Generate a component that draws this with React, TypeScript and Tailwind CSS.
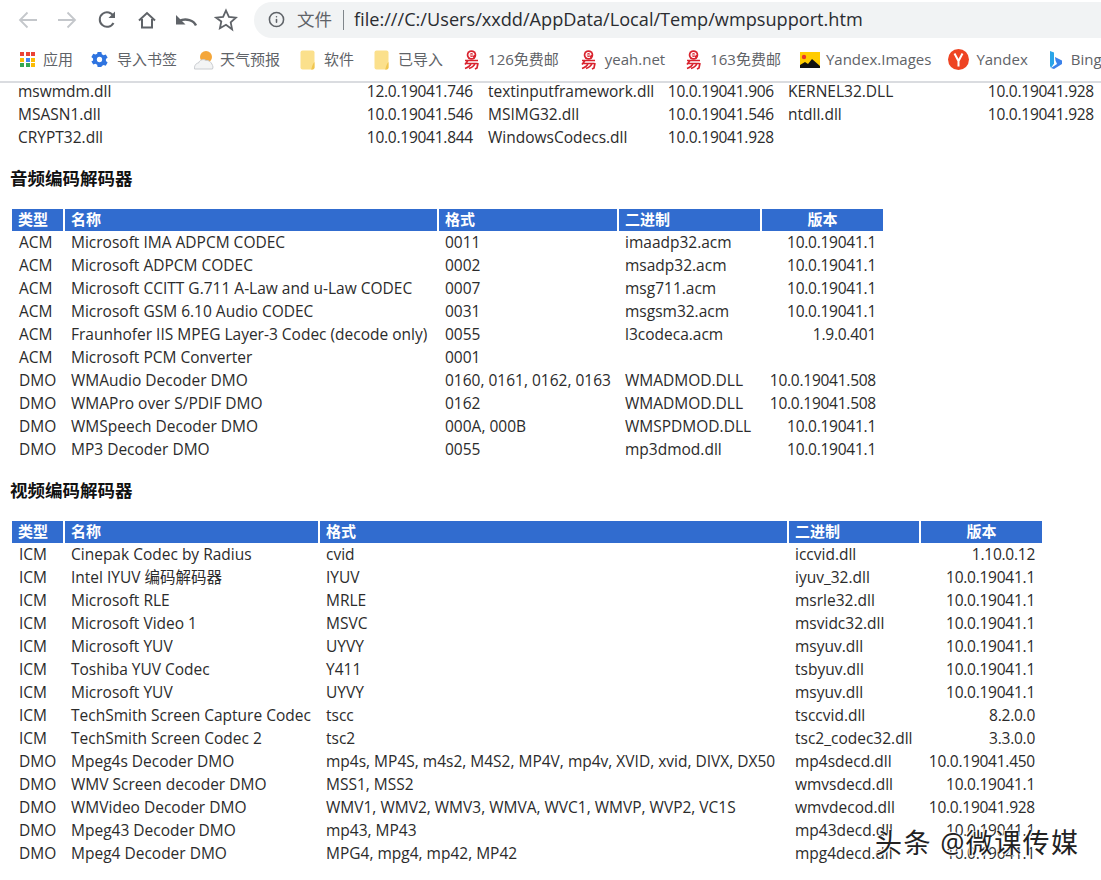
import { Info } from "lucide-react";

const font = "font-['Open_Sans','Noto_Sans_CJK_SC',sans-serif]";

const sysRows = [
  ["mswmdm.dll", "12.0.19041.746", "textinputframework.dll", "10.0.19041.906", "KERNEL32.DLL", "10.0.19041.928"],
  ["MSASN1.dll", "10.0.19041.546", "MSIMG32.dll", "10.0.19041.546", "ntdll.dll", "10.0.19041.928"],
  ["CRYPT32.dll", "10.0.19041.844", "WindowsCodecs.dll", "10.0.19041.928", "", ""],
];

const audioRows = [
  ["ACM", "Microsoft IMA ADPCM CODEC", "0011", "imaadp32.acm", "10.0.19041.1"],
  ["ACM", "Microsoft ADPCM CODEC", "0002", "msadp32.acm", "10.0.19041.1"],
  ["ACM", "Microsoft CCITT G.711 A-Law and u-Law CODEC", "0007", "msg711.acm", "10.0.19041.1"],
  ["ACM", "Microsoft GSM 6.10 Audio CODEC", "0031", "msgsm32.acm", "10.0.19041.1"],
  ["ACM", "Fraunhofer IIS MPEG Layer-3 Codec (decode only)", "0055", "l3codeca.acm", "1.9.0.401"],
  ["ACM", "Microsoft PCM Converter", "0001", "", ""],
  ["DMO", "WMAudio Decoder DMO", "0160, 0161, 0162, 0163", "WMADMOD.DLL", "10.0.19041.508"],
  ["DMO", "WMAPro over S/PDIF DMO", "0162", "WMADMOD.DLL", "10.0.19041.508"],
  ["DMO", "WMSpeech Decoder DMO", "000A, 000B", "WMSPDMOD.DLL", "10.0.19041.1"],
  ["DMO", "MP3 Decoder DMO", "0055", "mp3dmod.dll", "10.0.19041.1"],
];

const videoRows = [
  ["ICM", "Cinepak Codec by Radius", "cvid", "iccvid.dll", "1.10.0.12"],
  ["ICM", "Intel IYUV 编码解码器", "IYUV", "iyuv_32.dll", "10.0.19041.1"],
  ["ICM", "Microsoft RLE", "MRLE", "msrle32.dll", "10.0.19041.1"],
  ["ICM", "Microsoft Video 1", "MSVC", "msvidc32.dll", "10.0.19041.1"],
  ["ICM", "Microsoft YUV", "UYVY", "msyuv.dll", "10.0.19041.1"],
  ["ICM", "Toshiba YUV Codec", "Y411", "tsbyuv.dll", "10.0.19041.1"],
  ["ICM", "Microsoft YUV", "UYVY", "msyuv.dll", "10.0.19041.1"],
  ["ICM", "TechSmith Screen Capture Codec", "tscc", "tsccvid.dll", "8.2.0.0"],
  ["ICM", "TechSmith Screen Codec 2", "tsc2", "tsc2_codec32.dll", "3.3.0.0"],
  ["DMO", "Mpeg4s Decoder DMO", "mp4s, MP4S, m4s2, M4S2, MP4V, mp4v, XVID, xvid, DIVX, DX50", "mp4sdecd.dll", "10.0.19041.450"],
  ["DMO", "WMV Screen decoder DMO", "MSS1, MSS2", "wmvsdecd.dll", "10.0.19041.1"],
  ["DMO", "WMVideo Decoder DMO", "WMV1, WMV2, WMV3, WMVA, WVC1, WMVP, WVP2, VC1S", "wmvdecod.dll", "10.0.19041.928"],
  ["DMO", "Mpeg43 Decoder DMO", "mp43, MP43", "mp43decd.dll", "10.0.19041.1"],
  ["DMO", "Mpeg4 Decoder DMO", "MPG4, mpg4, mp42, MP42", "mpg4decd.dll", "10.0.19041.1"],
];

function NetEase() {
  return (
    <svg viewBox="0 0 17 20" className="h-5 w-[17px] shrink-0" fill="none" stroke="#d9232e">
      <circle cx="8.500" cy="5" r="4.800" fill="#d9232e" stroke="none" />
      <path d="M6 5h5M11 5a2.500 2.500 0 1 0-1 2" stroke="#fff" strokeWidth="1.200" />
      <path d="M2 10.500h13M2.500 13.500h12M5 10.500l-3 4M15 13l-1 5-2 1M8 13.500c-1 3-3 4-6 5M12 13.500c-1 2.500-3 4-6 5" strokeWidth="1.700" />
    </svg>
  );
}

function Folder() {
  return (
    <svg viewBox="0 0 15 20" className="h-5 w-[15px] shrink-0">
      <rect x="0.500" y="0.500" width="14" height="19" rx="2" fill="#fbe08c" />
      <path d="M14.500 12v5.500a2 2 0 0 1-2 2H11c1-1 1-5 3.500-7.500z" fill="#f0c650" />
    </svg>
  );
}

function Bookmark({ icon, label, className }: { icon: React.ReactNode; label: string; className: string }) {
  return (
    <div className={`flex shrink-0 items-center ${className}`}>
      {icon}
      <span className="whitespace-nowrap text-[15px] text-[#5f6368]">{label}</span>
    </div>
  );
}

function Toolbar() {
  return (
    <div className="flex h-[38px] items-center pl-[18px] pt-[1px]">
      <svg viewBox="0 0 20 20" className="h-5 w-5" fill="none" stroke="#c4c7cb" strokeWidth="1.800">
        <path d="M19 10H2M9.500 2.500L2 10l7.500 7.500" />
      </svg>
      <svg viewBox="0 0 20 20" className="ml-[19px] h-5 w-5" fill="none" stroke="#c4c7cb" strokeWidth="1.800">
        <path d="M1 10h17M10.500 2.500L18 10l-7.500 7.500" />
      </svg>
      <svg viewBox="0 0 20 20" className="ml-[20px] h-5 w-5" fill="none" stroke="#5f6368" strokeWidth="2">
        <path d="M16.500 13a7.300 7.300 0 1 1 .2-6.500" />
        <path d="M18 1.500V8h-6.500z" fill="#5f6368" stroke="none" />
      </svg>
      <svg viewBox="0 0 20 20" className="ml-[20px] h-5 w-5" fill="none" stroke="#5f6368" strokeWidth="2">
        <path d="M2 10.500L10 3l8 7.500M5 9v8.500h10V9" />
      </svg>
      <svg viewBox="0 0 22 20" className="ml-[18px] h-5 w-[22px]" fill="none" stroke="#5f6368" strokeWidth="2.400">
        <path d="M21 15.500C19 10.500 11 7.500 4 11" />
        <path d="M1 5v9.500h9.500z" fill="#5f6368" stroke="none" />
      </svg>
      <svg viewBox="0 0 24 24" className="ml-[17px] h-[24px] w-[24px]" fill="none" stroke="#5f6368" strokeWidth="1.800">
        <path d="M12 2.500l2.900 6.400 7 .8-5.200 4.700 1.400 6.900L12 16.800 5.900 20.300l1.400-6.900L2.100 9.700l7-.8z" />
      </svg>
      <div className="ml-[16px] flex h-[36px] min-w-0 flex-1 items-center rounded-l-full bg-[#f1f3f4] pl-[14px]">
        <Info className="h-[17px] w-[17px] text-[#5f6368]" strokeWidth={2.200} />
        <span className="ml-[12px] text-[17.500px] text-[#5f6368]">文件</span>
        <span className="ml-[11px] h-[20px] w-px bg-[#80868b]" />
        <span className="ml-[10px] whitespace-nowrap text-[18.150px] text-[#2a2c30]">file:///C:/Users/xxdd/AppData/Local/Temp/wmpsupport.htm</span>
      </div>
    </div>
  );
}

function Bookmarks() {
  return (
    <div className="flex h-[43px] items-center overflow-hidden">
      <Bookmark
        className="ml-[20px] gap-[8px]"
        label="应用"
        icon={
          <div className="grid h-[15px] w-[15px] shrink-0 grid-cols-3 gap-[1.500px]">
            {["#ea4335", "#ea4335", "#ea4335", "#fbbc05", "#4285f4", "#fbbc05", "#34a853", "#34a853", "#fbbc05"].map((c, i) => (
              <span key={i} className="bg-current" style={{ color: c }} />
            ))}
          </div>
        }
      />
      <Bookmark
        className="ml-[18px] gap-[9px]"
        label="导入书签"
        icon={
          <svg viewBox="0 0 18 18" className="h-[17px] w-[17px] shrink-0">
            <path d="M7 1h4l.5 2.400 1.800 1 2.300-.8 2 3.400-1.800 1.600v2l1.800 1.600-2 3.400-2.300-.8-1.800 1L11 17H7l-.5-2.400-1.800-1-2.300.8-2-3.400L2.200 10V8L.4 6.400l2-3.400 2.300.8 1.800-1z" fill="#2f74e0" />
            <circle cx="9" cy="9" r="2.800" fill="#fff" />
          </svg>
        }
      />
      <Bookmark
        className="ml-[17px] gap-[6px]"
        label="天气预报"
        icon={
          <svg viewBox="0 0 20 20" className="h-5 w-5 shrink-0">
            <circle cx="12" cy="7" r="6" fill="#f4a63a" />
            <path d="M.5 19c-.5-3 1.500-6 4-6 1-3 5-4.500 7.500-2.500 3-.5 6 2 7 6.500l-.5 2z" fill="#f3f4f5" stroke="#c9ccd0" />
          </svg>
        }
      />
      <Bookmark className="ml-[20px] gap-[9px]" label="软件" icon={<Folder />} />
      <Bookmark className="ml-[20px] gap-[9px]" label="已导入" icon={<Folder />} />
      <Bookmark className="ml-[20px] gap-[8px]" label="126免费邮" icon={<NetEase />} />
      <Bookmark className="ml-[21px] gap-[8px]" label="yeah.net" icon={<NetEase />} />
      <Bookmark className="ml-[20px] gap-[8px]" label="163免费邮" icon={<NetEase />} />
      <Bookmark
        className="ml-[19px] gap-[6px]"
        label="Yandex.Images"
        icon={
          <svg viewBox="0 0 20 16" className="h-4 w-5 shrink-0">
            <rect width="20" height="16" fill="#fc0" />
            <circle cx="4" cy="5" r="2.200" fill="#e8362c" />
            <path d="M0 16v-3l5-3 3 2 4-5 8 7v2z" fill="#111" />
          </svg>
        }
      />
      <Bookmark
        className="ml-[17px] gap-[7px]"
        label="Yandex"
        icon={
          <svg viewBox="0 0 21 21" className="h-[21px] w-[21px] shrink-0">
            <circle cx="10.500" cy="10.500" r="10.500" fill="#ee4423" />
            <path d="M6.500 4.500l4 7.500 4-7.500M10.500 11.500v6" fill="none" stroke="#fff" strokeWidth="2" />
          </svg>
        }
      />
      <Bookmark
        className="ml-[21px] gap-[8px]"
        label="Bing"
        icon={
          <svg viewBox="0 0 14 20" className="h-5 w-[14px] shrink-0">
            <path d="M1 1l4 1.500v11L2 18l-1-2z" fill="#2aa5e8" />
            <path d="M6 7l7 3.500v3.500L5 19l-3-1 6-4-1.500-3.500z" fill="#3b82ea" />
          </svg>
        }
      />
    </div>
  );
}

function DataTable({ widths, heads, rows }: { widths: number[]; heads: string[]; rows: string[][] }) {
  return (
    <table className="ml-3 table-fixed border-collapse text-[15.500px] leading-[23px] text-[#2b2b2b]">
      <colgroup>
        {widths.map((w, i) => (
          <col key={i} style={{ width: w }} />
        ))}
      </colgroup>
      <thead>
        <tr>
          {heads.map((h, i) => (
            <th
              key={i}
              className={`h-[22px] border-r-2 border-white bg-[#316ccf] px-[6px] pb-[2px] text-[15px] font-bold leading-[20px] text-white last:border-r-0 ${i === 4 ? "text-center" : "text-left"}`}
            >
              {h}
            </th>
          ))}
        </tr>
      </thead>
      <tbody>
        {rows.map((r, i) => (
          <tr key={i} className="h-[23px]">
            {r.map((c, j) => (
              <td key={j} className={`overflow-visible whitespace-nowrap pl-[7px] pr-[7px] ${j === 4 ? "text-right tracking-[-0.25px]" : ""}`}>
                {c}
              </td>
            ))}
          </tr>
        ))}
      </tbody>
    </table>
  );
}

export default function App() {
  return (
    <div className={`relative h-[880px] w-[1101px] overflow-hidden bg-white ${font}`}>
      <div className="border-b-2 border-[#dadce0]">
        <Toolbar />
        <Bookmarks />
      </div>
      <table className="ml-[11px] mt-[-3px] table-fixed border-collapse text-[15.500px] leading-[23px] text-[#2b2b2b]">
        <colgroup>
          <col className="w-[469px]" />
          <col className="w-[301px]" />
          <col className="w-[320px]" />
        </colgroup>
        <tbody>
          {sysRows.map((r) => (
            <tr key={r[0]} className="h-[23px]">
              <td className="px-[7px]">
                <div className="flex items-baseline justify-between">
                  <span>{r[0]}</span>
                  <span className="tracking-[-0.25px]">{r[1]}</span>
                </div>
              </td>
              <td className="pl-[8px] pr-[7px]">
                <div className="flex items-baseline justify-between">
                  <span>{r[2]}</span>
                  <span className="tracking-[-0.25px]">{r[3]}</span>
                </div>
              </td>
              <td className="px-[7px]">
                <div className="flex items-baseline justify-between">
                  <span>{r[4]}</span>
                  <span className="tracking-[-0.25px]">{r[5]}</span>
                </div>
              </td>
            </tr>
          ))}
        </tbody>
      </table>
      <h2 className="ml-[10px] mt-[17px] text-[17.500px] font-bold leading-[24px] text-[#111]">音频编码解码器</h2>
      <div className="mt-[19px]">
        <DataTable widths={[52, 374, 180, 143, 122]} heads={["类型", "名称", "格式", "二进制", "版本"]} rows={audioRows} />
      </div>
      <h2 className="ml-[10px] mt-[17px] text-[17.500px] font-bold leading-[24px] text-[#111]">视频编码解码器</h2>
      <div className="mt-[19px]">
        <DataTable widths={[52, 255, 469, 132, 122]} heads={["类型", "名称", "格式", "二进制", "版本"]} rows={videoRows} />
      </div>
      <div className="absolute left-[875px] top-[826px] text-[27px] leading-[34px] tracking-[1.400px] text-[#222] [text-shadow:0_0_2px_#fff,1px_1px_1px_#fff,-1px_-1px_1px_#fff]">
        头条 @微课传媒
      </div>
    </div>
  );
}
